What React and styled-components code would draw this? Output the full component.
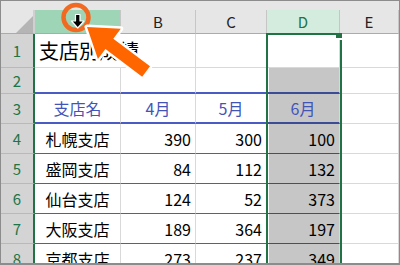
import React from 'react';
import styled, { createGlobalStyle } from 'styled-components';

const GlobalStyle = createGlobalStyle`
  html, body { margin: 0; padding: 0; background: #fff; }
  body { font-family: "Noto Sans CJK JP", "Noto Sans", sans-serif; }
  * { box-sizing: border-box; }
`;

const Frame = styled.div`
  position: relative;
  width: 400px;
  height: 265px;
  overflow: hidden;
  border: 1px solid #8c8c8c;
  border-bottom-width: 2px;
  background: #fff;
`;

const TopStrip = styled.div`
  height: 9px;
  background: #e6e6e6;
`;

const Sheet = styled.div`
  display: grid;
  grid-template-columns: 34px 86px 75px 71px 73px 1fr;
  grid-template-rows: 24px 34px 26px 30px repeat(5, 30px);
`;

const Corner = styled.div`
  position: relative;
  background: #e6e6e6;
  border-right: 2px solid #d0d0d0;
  border-bottom: 1px solid #ababab;

  &::after {
    content: "";
    position: absolute;
    right: 0;
    bottom: 0;
    width: 17px;
    height: 17px;
    background: #b5b5b5;
    clip-path: polygon(100% 0, 100% 100%, 0 100%);
  }
`;

const ColHead = styled.div`
  display: flex;
  align-items: center;
  justify-content: center;
  font-size: 15px;
  color: ${p => (p.$state === 'selected' ? '#217346' : '#222')};
  background: ${p =>
    p.$state === 'hover' ? '#9fd5b7' : p.$state === 'selected' ? '#d3ecdd' : '#e6e6e6'};
  border-right: 1px solid #c6c6c6;
  border-bottom: 1px solid #ababab;
`;

const RowHead = styled.div`
  display: flex;
  align-items: center;
  justify-content: center;
  font-size: 15px;
  color: #217346;
  background: #d4d4d4;
  border-right: 2px solid #217346;
  border-bottom: 1px solid #b9b9b9;
`;

const lineColor = (p) => {
  if (p.$line === 'thick' || p.$line === 'thin') return p.$sel ? '#3c4b98' : '#4a5bc4';
  return '#d9d9d9';
};

const Cell = styled.div`
  display: flex;
  align-items: center;
  justify-content: ${p =>
    p.$align === 'right' ? 'flex-end' : p.$align === 'center' ? 'center' : 'flex-start'};
  padding: 0 4px;
  font-size: ${p => (p.$title ? '20px' : '16px')};
  white-space: nowrap;
  overflow: visible;
  color: ${p => (p.$head ? '#4354b8' : '#000')};
  background: ${p => (p.$sel ? '#c6c6c6' : '#fff')};
  box-shadow: ${p => (p.$sel ? 'inset 2px 0 0 #fff' : 'none')};
  border-right: ${p => (p.$open ? 'none' : '1px solid #d9d9d9')};
  border-bottom: ${p => (p.$line === 'thick' ? '2px' : '1px')} solid ${lineColor};
  position: relative;
  z-index: ${p => (p.$title ? 1 : 0)};
`;

const Selection = styled.div`
  position: absolute;
  left: 265px;
  top: 32px;
  width: 76px;
  height: 240px;
  border: 2px solid #217346;
  pointer-events: none;
  z-index: 2;
`;

const FillHandle = styled.div`
  position: absolute;
  top: -2px;
  right: -2px;
  width: 6px;
  height: 7px;
  background: #217346;
  border-bottom: 2px solid #fff;
`;

const Callout = styled.svg`
  position: absolute;
  left: -1px;
  top: -1px;
  pointer-events: none;
  z-index: 3;
`;

const rows = [
  ['札幌支店', 390, 300, 100],
  ['盛岡支店', 84, 112, 132],
  ['仙台支店', 124, 52, 373],
  ['大阪支店', 189, 364, 197],
  ['京都支店', 273, 237, 349],
];

const App = () => {
  return (
    <Frame>
      <GlobalStyle />
      <TopStrip />
      <Sheet>
        <Corner />
        <ColHead $state="hover" />
        <ColHead>B</ColHead>
        <ColHead>C</ColHead>
        <ColHead $state="selected">D</ColHead>
        <ColHead>E</ColHead>

        <RowHead>1</RowHead>
        <Cell $title $open>支店別成績</Cell>
        <Cell />
        <Cell />
        <Cell />
        <Cell />

        <RowHead>2</RowHead>
        <Cell $line="thick" />
        <Cell $line="thick" />
        <Cell $line="thick" />
        <Cell $line="thick" $sel />
        <Cell />

        <RowHead>3</RowHead>
        <Cell $line="thick" $head $align="center">支店名</Cell>
        <Cell $line="thick" $head $align="center">4月</Cell>
        <Cell $line="thick" $head $align="center">5月</Cell>
        <Cell $line="thick" $head $align="center" $sel>6月</Cell>
        <Cell />

        {rows.map((r, i) => (
          <React.Fragment key={r[0]}>
            <RowHead>{i + 4}</RowHead>
            <Cell $line="thin" $align="center">{r[0]}</Cell>
            <Cell $line="thin" $align="right">{r[1]}</Cell>
            <Cell $line="thin" $align="right">{r[2]}</Cell>
            <Cell $line="thin" $align="right" $sel>{r[3]}</Cell>
            <Cell />
          </React.Fragment>
        ))}
      </Sheet>

      <Selection>
        <FillHandle />
      </Selection>

      <Callout width="400" height="265" viewBox="0 0 400 265">
        <circle cx="76" cy="17.5" r="12.5" fill="none" stroke="#f26a21" strokeWidth="4.5" />
        <path
          d="M75.5 14.5 h4.5 v6.5 h4 l-6.25 7 l-6.25 -7 h4 z"
          fill="#000"
          stroke="#fff"
          strokeWidth="1.2"
          strokeLinejoin="round"
        />
        <polygon
          points="0,0 28,-19 28,-6.5 74,-6.5 74,6.5 28,6.5 28,19"
          transform="translate(87 27) rotate(37)"
          fill="#ff6600"
          stroke="#fff"
          strokeWidth="5"
          strokeLinejoin="round"
          paintOrder="stroke"
        />
      </Callout>
    </Frame>
  );
};

export default App;
